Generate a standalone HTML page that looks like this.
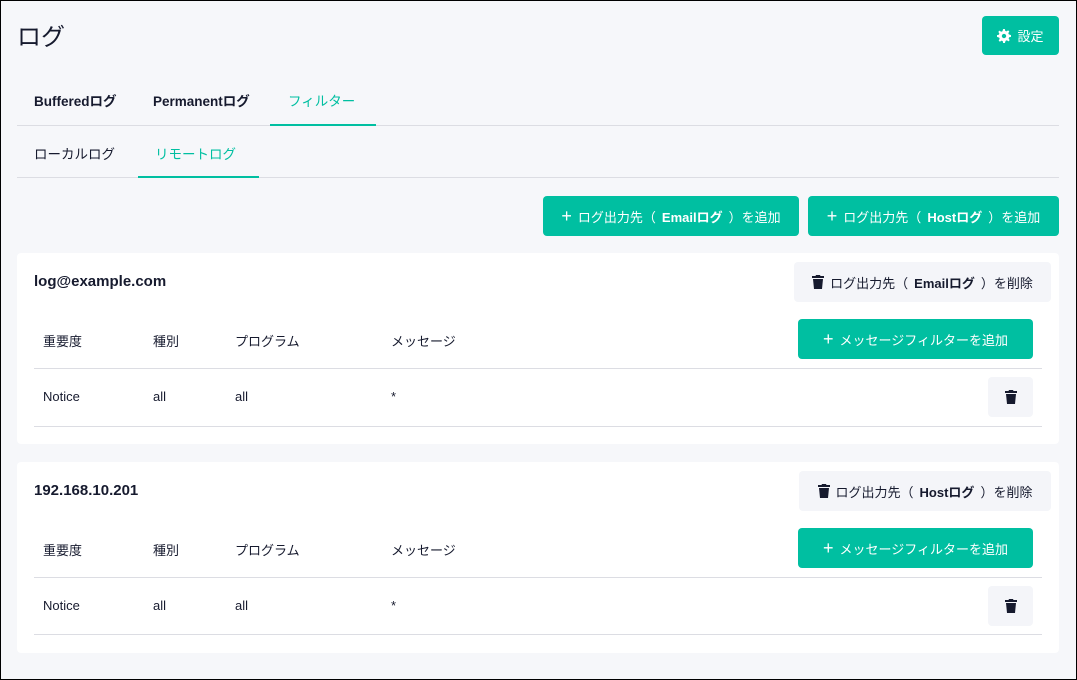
<!DOCTYPE html>
<html><head><meta charset="utf-8"><style>
*{box-sizing:border-box;margin:0;padding:0}
body{width:1077px;height:680px;background:#f6f7fa;font-family:"Liberation Sans","Noto Sans CJK JP",sans-serif;color:#161a2e;position:relative;overflow:hidden}
.frame{position:absolute;left:0;top:0;width:1077px;height:680px;border:1px solid #000;pointer-events:none;z-index:5}
.a{position:absolute;white-space:nowrap}
.btn{position:absolute;background:#00bfa1;color:#fff;border-radius:4px;font-size:13px;display:flex;align-items:center;justify-content:center;gap:6px}
.gbtn{position:absolute;background:#f4f5f9;border-radius:4px;font-size:13px;display:flex;align-items:center;justify-content:center;gap:6px;color:#161a2e}
.card{position:absolute;left:17px;width:1042px;height:191px;background:#fff;border-radius:4px}
.line{position:absolute;height:1px;background:#dcdde3}
.t{font-size:13px}
.tb{font-size:13.5px}
</style></head><body>
<div class="frame"></div>
<div class="a" style="left:17px;top:17px;font-size:24px">ログ</div>
<div class="btn" style="left:982px;top:16px;width:77px;height:39px;font-size:13px"><svg width="14" height="14" viewBox="0 0 16 16"><path fill="#fff" d="M7 0h2l.4 2.1 1.5.6 1.8-1.2 1.4 1.4-1.2 1.8.6 1.5L16 7v2l-2.1.4-.6 1.5 1.2 1.8-1.4 1.4-1.8-1.2-1.5.6L9 16H7l-.4-2.1-1.5-.6-1.8 1.2-1.4-1.4 1.2-1.8-.6-1.5L0 9V7l2.1-.4.6-1.5-1.2-1.8 1.4-1.4 1.8 1.2 1.5-.6zM8 5.5a2.5 2.5 0 100 5 2.5 2.5 0 000-5z"/></svg>設定</div>
<div class="a tb" style="left:34px;top:90px;font-weight:bold">Bufferedログ</div>
<div class="a tb" style="left:153px;top:90px;font-weight:bold">Permanentログ</div>
<div class="a tb" style="left:288px;top:90px;color:#00bfa1">フィルター</div>
<div class="line" style="left:17px;top:125px;width:1042px"></div>
<div class="a" style="left:270px;top:124px;width:106px;height:2px;background:#00bfa1"></div>
<div class="a tb" style="left:34px;top:143px">ローカルログ</div>
<div class="a tb" style="left:155px;top:143px;color:#00bfa1">リモートログ</div>
<div class="line" style="left:17px;top:177px;width:1042px"></div>
<div class="a" style="left:138px;top:176px;width:121px;height:2px;background:#00bfa1"></div>
<div class="btn" style="left:543px;top:196px;width:256px;height:40px"><span style="font-size:18px">+</span>ログ出力先（<b>Emailログ</b>）を追加</div>
<div class="btn" style="left:808px;top:196px;width:251px;height:40px"><span style="font-size:18px">+</span>ログ出力先（<b>Hostログ</b>）を追加</div>

<div class="card" style="top:253px"></div>
<div class="card" style="top:462px"></div>

<div class="a" style="left:34px;top:273px;font-size:15px;font-weight:bold">log@example.com</div>
<div class="gbtn" style="left:794px;top:262px;width:257px;height:40px"><svg width="12" height="14" viewBox="0 0 12 14"><path fill="#161a2e" d="M4 0h4l.5 1H12v2H0V1h3.5zM1 4h10l-1 10H2z"/></svg>ログ出力先（<b>Emailログ</b>）を削除</div>
<div class="a t" style="left:43px;top:331px">重要度</div>
<div class="a t" style="left:153px;top:331px">種別</div>
<div class="a t" style="left:235px;top:331px">プログラム</div>
<div class="a t" style="left:391px;top:331px">メッセージ</div>
<div class="btn" style="left:798px;top:319px;width:235px;height:40px"><span style="font-size:18px">+</span>メッセージフィルターを追加</div>
<div class="line" style="left:34px;top:368px;width:1008px"></div>
<div class="a t" style="left:43px;top:389px">Notice</div>
<div class="a t" style="left:153px;top:389px">all</div>
<div class="a t" style="left:235px;top:389px">all</div>
<div class="a t" style="left:391px;top:389px">*</div>
<div class="gbtn" style="left:988px;top:377px;width:45px;height:40px"><svg width="12" height="14" viewBox="0 0 12 14"><path fill="#161a2e" d="M4 0h4l.5 1H12v2H0V1h3.5zM1 4h10l-1 10H2z"/></svg></div>
<div class="line" style="left:34px;top:426px;width:1008px"></div>

<div class="a" style="left:34px;top:482px;font-size:15px;font-weight:bold">192.168.10.201</div>
<div class="gbtn" style="left:799px;top:471px;width:252px;height:40px"><svg width="12" height="14" viewBox="0 0 12 14"><path fill="#161a2e" d="M4 0h4l.5 1H12v2H0V1h3.5zM1 4h10l-1 10H2z"/></svg>ログ出力先（<b>Hostログ</b>）を削除</div>
<div class="a t" style="left:43px;top:540px">重要度</div>
<div class="a t" style="left:153px;top:540px">種別</div>
<div class="a t" style="left:235px;top:540px">プログラム</div>
<div class="a t" style="left:391px;top:540px">メッセージ</div>
<div class="btn" style="left:798px;top:528px;width:235px;height:40px"><span style="font-size:18px">+</span>メッセージフィルターを追加</div>
<div class="line" style="left:34px;top:577px;width:1008px"></div>
<div class="a t" style="left:43px;top:598px">Notice</div>
<div class="a t" style="left:153px;top:598px">all</div>
<div class="a t" style="left:235px;top:598px">all</div>
<div class="a t" style="left:391px;top:598px">*</div>
<div class="gbtn" style="left:988px;top:586px;width:45px;height:40px"><svg width="12" height="14" viewBox="0 0 12 14"><path fill="#161a2e" d="M4 0h4l.5 1H12v2H0V1h3.5zM1 4h10l-1 10H2z"/></svg></div>
<div class="line" style="left:34px;top:634px;width:1008px"></div>
</body></html>
